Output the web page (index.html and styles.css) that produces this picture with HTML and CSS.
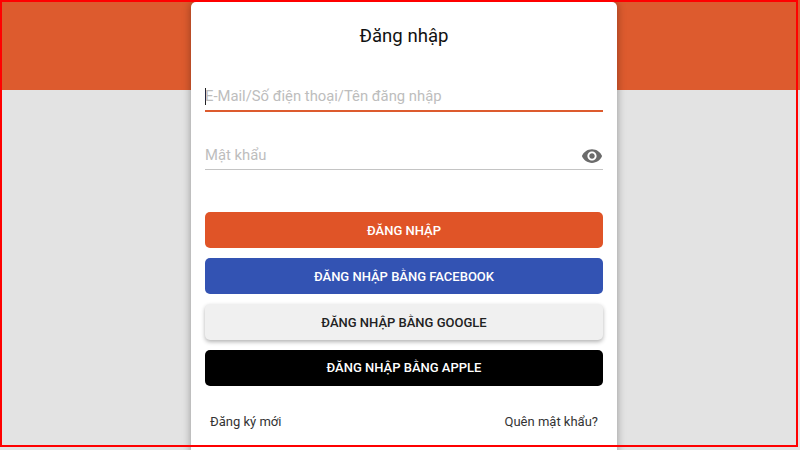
FILE: index.html
```html
<!DOCTYPE html>
<html lang="vi">
<head>
<meta charset="utf-8">
<title>Đăng nhập</title>
<link rel="stylesheet" href="styles.css">
</head>
<body>
<div class="page">
  <div class="hero"></div>
  <main class="card">
    <h1 class="title">Đăng nhập</h1>
    <div class="field field-active">
      <span class="caret"></span>
      <span class="placeholder">E-Mail/Số điện thoại/Tên đăng nhập</span>
    </div>
    <div class="field field-password">
      <span class="placeholder">Mật khẩu</span>
      <svg class="eye" viewBox="0 0 24 24" aria-hidden="true"><path d="M12 4.5C7 4.5 2.73 7.61 1 12c1.73 4.39 6 7.5 11 7.5s9.27-3.11 11-7.5c-1.73-4.39-6-7.5-11-7.5zM12 17c-2.76 0-5-2.24-5-5s2.24-5 5-5 5 2.24 5 5-2.24 5-5 5zm0-8c-1.66 0-3 1.34-3 3s1.34 3 3 3 3-1.34 3-3-1.34-3-3-3z"/></svg>
    </div>
    <div class="actions">
      <button class="btn btn-primary">ĐĂNG NHẬP</button>
      <button class="btn btn-facebook">ĐĂNG NHẬP BẰNG FACEBOOK</button>
      <button class="btn btn-google">ĐĂNG NHẬP BẰNG GOOGLE</button>
      <button class="btn btn-apple">ĐĂNG NHẬP BẰNG APPLE</button>
    </div>
    <div class="links">
      <a class="link">Đăng ký mới</a>
      <a class="link">Quên mật khẩu?</a>
    </div>
  </main>
  <div class="frame"></div>
</div>
</body>
</html>
```
FILE: styles.css
```css
* { box-sizing: border-box; }
html, body { margin: 0; height: 100%; overflow: hidden; }
body { font-family: Roboto, "Liberation Sans", sans-serif; background: #e3e3e3; }
.page { position: relative; width: 800px; height: 450px; overflow: hidden; display: grid; grid-template-columns: 1fr; grid-template-rows: 1fr; }
.hero { grid-area: 1 / 1; height: 90px; background: #dd5b2e; }
.card { grid-area: 1 / 1; justify-self: start; width: 426px; margin: 2px 0 -40px 191px; height: 490px; padding: 0 14px; background: #fff; border-radius: 5px 5px 0 0; box-shadow: 0 0 8px rgba(0,0,0,.35); display: flex; flex-direction: column; }
.title { margin: 22px 0 0; height: 24px; font-size: 18.6px; line-height: 24px; font-weight: 400; color: #111; text-align: center; }
.field { display: flex; align-items: center; height: 36px; position: relative; }
.field-active { margin-top: 28px; border-bottom: 2px solid #dd5b2e; padding: 8px 0 2px; }
.field-password { margin-top: 22px; border-bottom: 1.5px solid #c4c4c4; padding: 8px 0 1px; justify-content: space-between; }
.placeholder { font-size: 14.8px; color: #bdbdbd; line-height: 20px; }
.caret { width: 1px; height: 17px; background: #222; margin-right: -1px; }
.eye { width: 22px; height: 22px; fill: #6b6b6b; margin: 2px 0 0 0; }
.actions { margin-top: 41.7px; display: flex; flex-direction: column; gap: 9.3px; }
.btn { display: block; width: 100%; height: 36.7px; border: 0; border-radius: 5px; font: 500 13px Roboto, "Liberation Sans", sans-serif; color: #fff; padding: 0; }
.btn-primary { background: #e05427; }
.btn-facebook { background: #3353b3; }
.btn-google { background: #f0f0f0; color: #222; box-shadow: 0 2px 4px rgba(0,0,0,.3); }
.btn-apple { background: #000; }
.links { margin-top: 25.5px; padding: 0 5px; display: flex; justify-content: space-between; }
.link { font-size: 13px; line-height: 20px; color: #333; }
.frame { position: absolute; left: 0; top: 0; width: 798px; height: 447px; border: 2px solid #f00; pointer-events: none; }
```
